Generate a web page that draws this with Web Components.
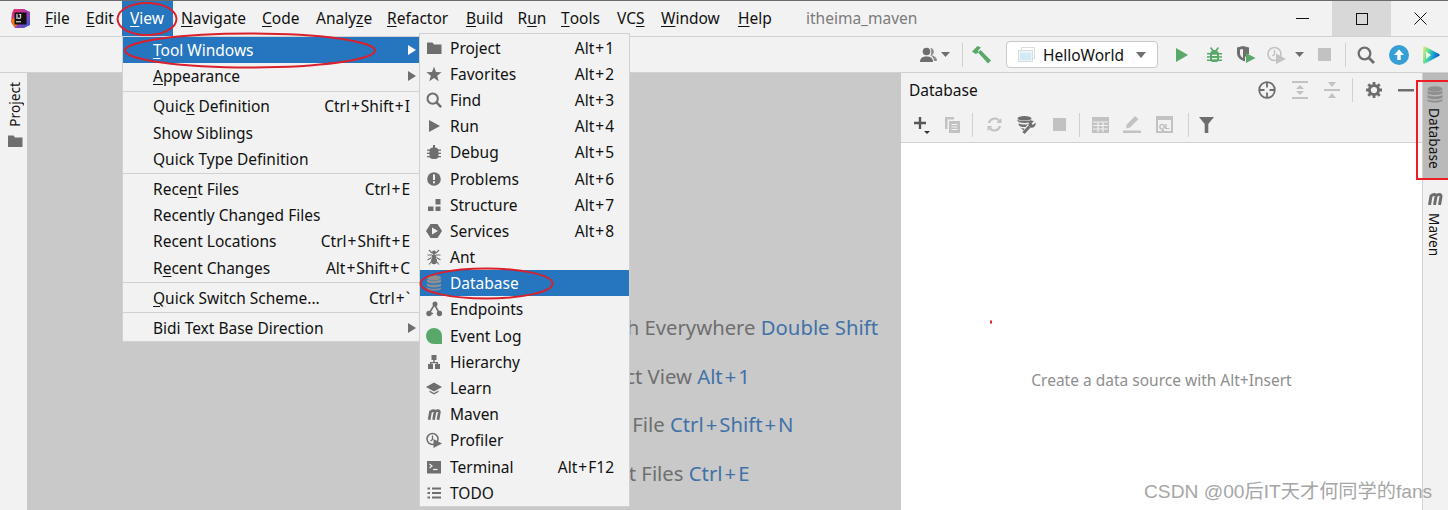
<!DOCTYPE html>
<html lang="en"><head><meta charset="utf-8"><title>itheima_maven</title>
<style>
html,body{margin:0;padding:0;width:1448px;height:510px;overflow:hidden;background:#f2f2f2}
body{font:15.5px "Noto Sans","Open Sans",sans-serif;color:#111}
u{text-underline-offset:2px}
ij-hint i{font-style:normal;margin:0 2px}
</style></head><body>
<ij-window>
  <ij-titlebar>
    <ij-icon slot="logo" name="ij" w="21" h="21"></ij-icon>
    <ij-menubar-item w="41"><u>F</u>ile</ij-menubar-item>
    <ij-menubar-item w="44"><u>E</u>dit</ij-menubar-item>
    <ij-menubar-item w="51" active><u>V</u>iew</ij-menubar-item>
    <ij-menubar-item w="81"><u>N</u>avigate</ij-menubar-item>
    <ij-menubar-item w="54"><u>C</u>ode</ij-menubar-item>
    <ij-menubar-item w="71">Analy<u>z</u>e</ij-menubar-item>
    <ij-menubar-item w="79"><u>R</u>efactor</ij-menubar-item>
    <ij-menubar-item w="51.5"><u>B</u>uild</ij-menubar-item>
    <ij-menubar-item w="43.5">R<u>u</u>n</ij-menubar-item>
    <ij-menubar-item w="56"><u>T</u>ools</ij-menubar-item>
    <ij-menubar-item w="44">VC<u>S</u></ij-menubar-item>
    <ij-menubar-item w="77"><u>W</u>indow</ij-menubar-item>
    <ij-menubar-item w="68"><u>H</u>elp</ij-menubar-item>
    <span slot="title">itheima_maven</span>
  </ij-titlebar>
  <ij-toolrow slot="toolbar" pad="920">
    <ij-icon name="person" w="18" h="16"></ij-icon>
    <ij-icon name="caret" w="9" h="5" ml="3"></ij-icon>
    <ij-sep ml="12"></ij-sep>
    <ij-icon name="hammer" w="19" h="18" ml="9"></ij-icon>
    <ij-combo ml="15">HelloWorld</ij-combo>
    <ij-icon name="run" w="12" h="14" ml="18"></ij-icon>
    <ij-icon name="debug" w="15" h="16" ml="19"></ij-icon>
    <ij-icon name="coverage" w="19" h="17" ml="15"></ij-icon>
    <ij-icon name="profilerd" w="19" h="18" ml="11"></ij-icon>
    <ij-icon name="caret" w="9" h="5" ml="9"></ij-icon>
    <ij-icon name="stopd" w="13" h="13" ml="14"></ij-icon>
    <ij-sep ml="14"></ij-sep>
    <ij-icon name="find" w="18" h="18" ml="11"></ij-icon>
    <ij-icon name="upload" w="20" h="20" ml="14"></ij-icon>
    <ij-icon name="plugin" w="18" h="18" ml="13"></ij-icon>
  </ij-toolrow>
  <ij-strip slot="left" side="left">
    <ij-stripe-button flip>Project<ij-icon slot="icon" name="folder" w="16" h="16"></ij-icon></ij-stripe-button>
  </ij-strip>
  <ij-editor slot="center">
    <ij-hint ml="575">Search Everywhere <b>Double Shift</b></ij-hint>
    <ij-hint ml="576">Project View <b>Alt<i>+</i>1</b></ij-hint>
    <ij-hint ml="575">Go to File <b>Ctrl<i>+</i>Shift<i>+</i>N</b></ij-hint>
    <ij-hint ml="571">Recent Files <b>Ctrl<i>+</i>E</b></ij-hint>
  </ij-editor>
  <ij-panel slot="panel" heading="Database" empty="Create a data source with Alt+Insert">
    <ij-icon slot="head" name="target" w="18" h="18"></ij-icon>
    <ij-icon slot="head" name="expand" w="16" h="18" ml="16"></ij-icon>
    <ij-icon slot="head" name="collapse" w="16" h="18" ml="16"></ij-icon>
    <ij-sep slot="head" ml="12"></ij-sep>
    <ij-icon slot="head" name="gear" w="16" h="16" ml="13"></ij-icon>
    <ij-icon slot="head" name="minus" w="16" h="3" ml="16"></ij-icon>
    <ij-icon slot="tools" name="plus" w="17" h="18"></ij-icon>
    <ij-icon slot="tools" name="copy" w="16" h="16" ml="14"></ij-icon>
    <ij-sep slot="tools" ml="12"></ij-sep>
    <ij-icon slot="tools" name="refresh" w="15" h="15" ml="14"></ij-icon>
    <ij-icon slot="tools" name="dbwrench" w="19" h="18" ml="15"></ij-icon>
    <ij-icon slot="tools" name="stopd" w="13" h="13" ml="17"></ij-icon>
    <ij-sep slot="tools" ml="13"></ij-sep>
    <ij-icon slot="tools" name="table" w="17" h="16" ml="12"></ij-icon>
    <ij-icon slot="tools" name="edit" w="18" h="17" ml="14"></ij-icon>
    <ij-icon slot="tools" name="ql" w="17" h="17" ml="15"></ij-icon>
    <ij-sep slot="tools" ml="15"></ij-sep>
    <ij-icon slot="tools" name="filter" w="15" h="16" ml="10"></ij-icon>
  </ij-panel>
  <ij-strip slot="right" side="right">
    <ij-stripe-button active>Database<ij-icon slot="icon" name="database" w="16" h="17"></ij-icon></ij-stripe-button>
    <ij-stripe-button>Maven<ij-icon slot="icon" name="maven" w="18" h="12"></ij-icon></ij-stripe-button>
  </ij-strip>

  <ij-menu slot="overlay" x="122" y="36" w="298" rpad="9" ptop="0">
    <ij-menu-item selected arrow><u>T</u>ool Windows</ij-menu-item>
    <ij-menu-item arrow><u>A</u>ppearance</ij-menu-item>
    <ij-menu-sep></ij-menu-sep>
    <ij-menu-item shortcut="Ctrl+Shift+I">Quic<u>k</u> Definition</ij-menu-item>
    <ij-menu-item>Show Siblings</ij-menu-item>
    <ij-menu-item>Quick Type Definition</ij-menu-item>
    <ij-menu-sep></ij-menu-sep>
    <ij-menu-item shortcut="Ctrl+E">Rece<u>n</u>t Files</ij-menu-item>
    <ij-menu-item>Recently Changed Files</ij-menu-item>
    <ij-menu-item shortcut="Ctrl+Shift+E">Recent Locations</ij-menu-item>
    <ij-menu-item shortcut="Alt+Shift+C">R<u>e</u>cent Changes</ij-menu-item>
    <ij-menu-sep></ij-menu-sep>
    <ij-menu-item shortcut="Ctrl+`"><u>Q</u>uick Switch Scheme...</ij-menu-item>
    <ij-menu-sep></ij-menu-sep>
    <ij-menu-item arrow>Bidi Text Base Direction</ij-menu-item>
  </ij-menu>
  <ij-menu slot="overlay" x="419" y="33" w="211" rpad="15" ptop="0.5">
    <ij-menu-item icon="folder" shortcut="Alt+1">Project</ij-menu-item>
    <ij-menu-item icon="star" shortcut="Alt+2">Favorites</ij-menu-item>
    <ij-menu-item icon="find" shortcut="Alt+3">Find</ij-menu-item>
    <ij-menu-item icon="runm" shortcut="Alt+4">Run</ij-menu-item>
    <ij-menu-item icon="bug" shortcut="Alt+5">Debug</ij-menu-item>
    <ij-menu-item icon="problems" shortcut="Alt+6">Problems</ij-menu-item>
    <ij-menu-item icon="structure" shortcut="Alt+7">Structure</ij-menu-item>
    <ij-menu-item icon="services" shortcut="Alt+8">Services</ij-menu-item>
    <ij-menu-item icon="ant">Ant</ij-menu-item>
    <ij-menu-item icon="database" selected>Database</ij-menu-item>
    <ij-menu-item icon="endpoints">Endpoints</ij-menu-item>
    <ij-menu-item icon="eventlog">Event Log</ij-menu-item>
    <ij-menu-item icon="hierarchy">Hierarchy</ij-menu-item>
    <ij-menu-item icon="learn">Learn</ij-menu-item>
    <ij-menu-item icon="maven">Maven</ij-menu-item>
    <ij-menu-item icon="profiler">Profiler</ij-menu-item>
    <ij-menu-item icon="terminal" shortcut="Alt+F12">Terminal</ij-menu-item>
    <ij-menu-item icon="todo">TODO</ij-menu-item>
  </ij-menu>
  <ij-annotations slot="overlay"></ij-annotations>
  <ij-watermark slot="overlay">CSDN @00后IT天才何同学的fans</ij-watermark>
</ij-window>
<script>
const G='#6e6e6e',D='#c2c2c2',GR='#59a869';
const ICONS={
 ij:`<svg viewBox="0 0 21 21"><defs><linearGradient id="a" x1="0" y1="0" x2="1" y2="1"><stop offset="0" stop-color="#fe2857"/><stop offset=".5" stop-color="#a53bb0"/><stop offset="1" stop-color="#2f5de0"/></linearGradient></defs><path d="M4 1h10l6 3v13l-6 3H5L1 14l1-9z" fill="url(#a)"/><path d="M1 12l4-3 2 9-3 1z" fill="#f97a12"/><rect x="4.5" y="4.5" width="12" height="12" fill="#111"/><text x="6" y="11" font-family="Liberation Sans" font-weight="700" font-size="6.5" fill="#fff">IJ</text><rect x="6" y="13.3" width="5" height="1" fill="#fff"/></svg>`,
 person:`<svg viewBox="0 0 18 16"><circle cx="6.5" cy="4.5" r="3.8" fill="${G}"/><path d="M0 15c0-4 2.500-5.500 6.500-5.500S13 11 13 15z" fill="${G}"/><path d="M10.500 1a3.800 3.800 0 0 1 1 7.300c3 .7 5.500 2 5.500 5.700h-3c0-3-2-5-3.500-5.500 1-2 1-5 0-7.500z" fill="#8d8d8d"/></svg>`,
 caret:`<svg viewBox="0 0 9 5"><path d="M0 0h9L4.500 5z" fill="${G}"/></svg>`,
 hammer:`<svg viewBox="0 0 19 18"><path d="M0 5.500 5.500 0l3.500 1.500L6.500 4 6 7 3.500 8z" fill="${GR}"/><path d="M6 6.500 8.500 4 19 14.500 16 17.500z" fill="${GR}"/></svg>`,
 run:`<svg viewBox="0 0 12 14"><path d="M0 0l12 7L0 14z" fill="${GR}"/></svg>`,
 debug:`<svg viewBox="0 0 15 16"><g fill="${GR}"><rect x="3" y="4" width="9" height="11" rx="3"/><rect x="0" y="6" width="15" height="1.500"/><rect x="0" y="9.200" width="15" height="1.500"/><rect x="0" y="12.500" width="15" height="1.500"/><path d="M3 1l1.200-1 2.300 3h2L10.800 0 12 1l-2 3H5z"/></g><rect x="5" y="7.700" width="5" height="1.300" fill="#f2f2f2"/><rect x="5" y="11" width="5" height="1.300" fill="#f2f2f2"/></svg>`,
 coverage:`<svg viewBox="0 0 19 17"><path d="M0 1.500 6 0l6 1.500V8l-4 3v4.500C3 14 0 11 0 7z" fill="${G}"/><path d="M3 3.500 6 3v9C4 11 3 9 3 7z" fill="#f2f2f2"/><path d="M9 7l9.500 5L9 17z" fill="${GR}"/></svg>`,
 profilerd:`<svg viewBox="0 0 19 18"><circle cx="7.500" cy="8" r="6.500" fill="none" stroke="${D}" stroke-width="1.600"/><path d="M7.500 4v4.500L5 10" fill="none" stroke="${D}" stroke-width="1.400"/><path d="M9 7.500 19 13 9 18z" fill="${D}"/></svg>`,
 stopd:`<svg viewBox="0 0 13 13"><rect width="13" height="13" fill="${D}"/></svg>`,
 find:`<svg viewBox="0 0 18 18"><circle cx="7.500" cy="7.500" r="5.800" fill="none" stroke="${G}" stroke-width="2.300"/><path d="M11.500 11.500 17 17" stroke="${G}" stroke-width="2.800"/></svg>`,
 upload:`<svg viewBox="0 0 20 20"><circle cx="10" cy="10" r="10" fill="#389fd6"/><path d="M10 4.500 15 10h-3.300v5H8.300v-5H5z" fill="#fff"/></svg>`,
 plugin:`<svg viewBox="0 0 18 18"><defs><linearGradient id="p" x1="0" y1="0" x2="1" y2=".3"><stop offset="0" stop-color="#f7ec7a"/><stop offset=".4" stop-color="#4fdc96"/><stop offset=".7" stop-color="#15a0d8"/><stop offset="1" stop-color="#0d5fc0"/></linearGradient></defs><path d="M1 1.500Q1 0 3 .5L17 8q1.500 1 0 2L3 17.500Q1 18 1 16.500z" fill="url(#p)"/><path d="M4 5.500 9 9l-5 4z" fill="#f0f9ee"/></svg>`,
 folder:`<svg viewBox="0 0 16 16"><path d="M1 2.500h5.500L8 4.500h7.500V14H1z" fill="${G}"/></svg>`,
 star:`<svg viewBox="0 0 16 16"><path d="M8 .8l2 5.200 5.600.3-4.400 3.500 1.500 5.400L8 12.100l-4.700 3.100 1.500-5.400L.4 6.300 6 6z" fill="${G}"/></svg>`,
 runm:`<svg viewBox="0 0 16 16"><path d="M3 2l11 6-11 6z" fill="${G}"/></svg>`,
 bug:`<svg viewBox="0 0 16 16"><g fill="${G}"><rect x="3.500" y="3.500" width="9" height="11.500" rx="3.500"/><rect x="1" y="5.500" width="14" height="1.300"/><rect x="1" y="8.700" width="14" height="1.300"/><rect x="1" y="12" width="14" height="1.300"/><rect x="7" y="1" width="2" height="3"/></g></svg>`,
 problems:`<svg viewBox="0 0 16 16"><circle cx="8" cy="8" r="6.800" fill="${G}"/><rect x="7" y="3.500" width="2" height="5.500" fill="#f2f2f2"/><rect x="7" y="10.300" width="2" height="2" fill="#f2f2f2"/></svg>`,
 structure:`<svg viewBox="0 0 16 16"><g fill="${G}"><rect x="9.500" y="2" width="5" height="5.500"/><rect x="2" y="9.500" width="5.500" height="4.500"/><rect x="9.500" y="9.500" width="5" height="4.500"/></g></svg>`,
 services:`<svg viewBox="0 0 16 16"><path d="M4.500 1h7L16 8l-4.500 7h-7L0 8z" fill="${G}"/><path d="M6 4.500 12 8l-6 3.500z" fill="#f2f2f2"/></svg>`,
 ant:`<svg viewBox="0 0 16 16"><g fill="${G}"><ellipse cx="8" cy="3.500" rx="2" ry="2"/><ellipse cx="8" cy="7.500" rx="2.300" ry="2.300"/><ellipse cx="8" cy="12" rx="3" ry="3.300"/></g><path d="M3 1l3 3M13 1l-3 3M1.500 6H6M14.500 6H10M1.500 11l4-2.500M14.500 11l-4-2.500M3 15.500l2.500-3M13 15.500l-2.500-3" stroke="${G}" stroke-width="1.100" fill="none"/></svg>`,
 database:`<svg viewBox="0 0 16 17"><g fill="#8f8f8f"><ellipse cx="8" cy="3" rx="7.500" ry="2.800"/><path d="M.5 4.500C2 6.500 14 6.500 15.500 4.500v2.700C14 9.600 2 9.600.5 7.200z"/><path d="M.5 8.800C2 11 14 11 15.500 8.800v2.700C14 13.900 2 13.900.5 11.500z"/><path d="M.5 13c1.500 2.300 13.500 2.300 15 0v1.500c-1.500 2.700-13.500 2.700-15 0z"/></g></svg>`,
 endpoints:`<svg viewBox="0 0 16 16"><path d="M3 12.500 8.500 3.500l5 9" fill="none" stroke="${G}" stroke-width="1.600"/><path d="M3 12.500h4" stroke="${G}" stroke-width="1.400"/><circle cx="3" cy="12.500" r="2.700" fill="${G}"/><circle cx="9" cy="3" r="2.500" fill="${G}"/><circle cx="13.500" cy="12.500" r="2.700" fill="${G}"/></svg>`,
 eventlog:`<svg viewBox="0 0 16 16"><path d="M8 0a8 8 0 0 0 0 16h8V8a8 8 0 0 0-8-8z" fill="${GR}"/></svg>`,
 hierarchy:`<svg viewBox="0 0 16 16"><g fill="${G}"><rect x="5.500" y="1" width="5" height="5"/><rect x="2" y="10" width="5" height="5"/><rect x="9" y="10" width="5" height="5"/><path d="M7.300 6h1.400v2H12v2h-1.400V9.300H5.400V10H4V8h3.300z"/></g></svg>`,
 learn:`<svg viewBox="0 0 16 16"><path d="M8 2.500 16 7l-8 4.500L0 7z" fill="${G}"/><path d="M3.500 10.500 8 13l4.500-2.500V12L8 14.500 3.500 12z" fill="${G}"/></svg>`,
 maven:`<svg viewBox="0 0 18 12"><path d="M3.500 12 5.200 2M8.500 12l1.500-8.500C10.300 1 7 1 5.200 3M13.500 12l1.500-8.500C15.300 1 12 1 10 3" fill="none" stroke="${G}" stroke-width="3"/></svg>`,
 profiler:`<svg viewBox="0 0 16 16"><circle cx="6.500" cy="7" r="5.500" fill="none" stroke="${G}" stroke-width="1.500"/><path d="M6.500 3.500v4L4.500 9" fill="none" stroke="${G}" stroke-width="1.300"/><path d="M7.500 7 16 11.500 7.500 16z" fill="${G}"/></svg>`,
 terminal:`<svg viewBox="0 0 16 16"><rect x="1" y="2" width="14" height="12.500" fill="${G}"/><path d="M3.500 5l2.500 2-2.500 2" fill="none" stroke="#f2f2f2" stroke-width="1.200"/><path d="M7 10.500h4.500" stroke="#f2f2f2" stroke-width="1.200"/></svg>`,
 todo:`<svg viewBox="0 0 16 16"><path d="M1.500 3.500h2.500M6 3.500h9M1.500 8h2.500M6 8h9M1.500 12.500h2.500M6 12.500h9" stroke="${G}" stroke-width="2"/></svg>`,
 target:`<svg viewBox="0 0 18 18"><circle cx="9" cy="9" r="7.800" fill="none" stroke="${G}" stroke-width="1.800"/><path d="M9 1v5.500M9 11.500V17M1 9h5.500M11.500 9H17" stroke="${G}" stroke-width="1.800"/></svg>`,
 expand:`<svg viewBox="0 0 16 18"><g fill="${D}"><rect y="0" width="16" height="2"/><rect y="16" width="16" height="2"/><path d="M8 4l4 4H4zM8 14l-4-4h8z"/></g></svg>`,
 collapse:`<svg viewBox="0 0 16 18"><g fill="${D}"><rect y="8" width="16" height="2"/><path d="M4 1h8L8 6zM8 12l4 5H4z"/></g></svg>`,
 gear:`<svg viewBox="0 0 16 16"><circle cx="8" cy="8" r="4.600" fill="none" stroke="${G}" stroke-width="3"/><path d="M8 0v3M8 13v3M0 8h3M13 8h3M2.300 2.300l2.200 2.200M11.500 11.500l2.200 2.200M13.700 2.300l-2.200 2.200M4.500 11.500l-2.200 2.200" stroke="${G}" stroke-width="2.800"/></svg>`,
 minus:`<svg viewBox="0 0 16 3"><rect width="16" height="2.500" fill="${G}"/></svg>`,
 plus:`<svg viewBox="0 0 17 18"><path d="M7 1v12M1 7h12" stroke="#555" stroke-width="2.400"/><path d="M11 15h6l-3 3z" fill="#333"/></svg>`,
 copy:`<svg viewBox="0 0 16 16"><path d="M1 0h9v2.500H3.500V12H1z" fill="${D}"/><rect x="5" y="4" width="11" height="12" fill="${D}"/><path d="M7.500 7.500h6M7.500 10h6M7.500 12.500h6" stroke="#f2f2f2" stroke-width="1"/></svg>`,
 refresh:`<svg viewBox="0 0 15 15"><path d="M2 6a5.800 5.800 0 0 1 10-2.500M13 9a5.800 5.800 0 0 1-10 2.500" fill="none" stroke="${D}" stroke-width="2.200"/><path d="M14.500 1v5h-5zM.5 14V9h5z" fill="${D}"/></svg>`,
 dbwrench:`<svg viewBox="0 0 19 18"><g fill="${G}"><ellipse cx="7.500" cy="2.300" rx="7" ry="2.300"/><path d="M.5 3.500C2 5.500 13 5.500 14.500 3.500V5C13 7.500 2 7.500.5 5z"/><path d="M1.500 7C3 8.800 9 9 11 8L8.500 11C5 11 3 10.500 2 9.500z"/><path d="M3.500 11.500c1 .7 3 1 4 1L6.500 14.500z"/></g><path d="M6.500 17l6-6.500" stroke="${G}" stroke-width="3"/><path d="M11.500 9.500a4 4 0 0 1 5.500-4.500l-2.500 2.500 1.500 1.500 2.500-2.500a4 4 0 0 1-5 5z" fill="${G}"/></svg>`,
 table:`<svg viewBox="0 0 17 16"><rect width="17" height="16" fill="${D}"/><path d="M1 5h15M1 8.500h15M1 12h15M6 5v10M11 5v10" stroke="#f2f2f2" stroke-width="1.200"/></svg>`,
 edit:`<svg viewBox="0 0 18 17"><path d="M12 0l3.500 3L7 11.500l-4 1 .8-4z" fill="${D}"/><rect y="14.500" width="18" height="2.500" fill="${D}"/></svg>`,
 ql:`<svg viewBox="0 0 17 17"><rect x="1" y="1" width="15" height="15" fill="none" stroke="${D}" stroke-width="2"/><rect x="1" y="1" width="15" height="3" fill="${D}"/><text x="3" y="13" font-family="Liberation Sans" font-weight="700" font-size="7.500" fill="#b0b0b0">QL</text></svg>`,
 filter:`<svg viewBox="0 0 15 16"><path d="M0 0h15L9.300 7v9H5.700V7z" fill="${G}"/></svg>`,
};
const def=(n,c)=>customElements.define(n,c);
const shadow=(el,html)=>{el.attachShadow({mode:'open'}).innerHTML=html};

def('ij-window',class extends HTMLElement{constructor(){super();shadow(this,`<style>
:host{display:grid;width:1448px;height:510px;position:relative;overflow:hidden;box-sizing:border-box;border-top:1px solid #6b6b6b;background:#f2f2f2;
 grid-template-rows:35px 1px 35px 1px 437px;grid-template-columns:27px 874px 521px 26px}
.tb{grid-column:1/-1;grid-row:1}.l1{grid-column:1/-1;grid-row:2;background:#d1d1d1}
.tl{grid-column:1/-1;grid-row:3}.l2{grid-column:1/-1;grid-row:4;background:#d1d1d1}
.a{grid-row:5;min-height:0;min-width:0;overflow:hidden;display:flex}
</style><div class="tb"><slot></slot></div><div class="l1"></div><div class="tl"><slot name="toolbar"></slot></div><div class="l2"></div>
<div class="a"><slot name="left"></slot></div><div class="a"><slot name="center"></slot></div><div class="a"><slot name="panel"></slot></div><div class="a"><slot name="right"></slot></div>
<slot name="overlay"></slot>`)}});

def('ij-titlebar',class extends HTMLElement{constructor(){super();shadow(this,`<style>
:host{display:flex;height:35px;align-items:stretch;overflow:hidden;white-space:nowrap}
.logo{width:37px;padding-left:10px;box-sizing:border-box;display:flex;align-items:center}
.items{display:flex}
.title{margin-left:8px;align-self:center;color:#7b7b7b;margin-top:-2px}
.ctl{margin-left:auto;display:flex;margin-right:-2px}
.ctl div{width:59px;display:flex;align-items:center;justify-content:center}
.ctl .h{background:#d8d8d8}
svg{display:block}
</style><div class="logo"><slot name="logo"></slot></div><div class="items"><slot></slot></div><div class="title"><slot name="title"></slot></div>
<div class="ctl"><div><svg width="13" height="13"><path d="M0 6.500h13" stroke="#111"/></svg></div><div class="h"><svg width="12" height="12"><rect x=".5" y=".5" width="11" height="11" fill="none" stroke="#111"/></svg></div><div><svg width="13" height="13"><path d="M.5.500l12 12M12.500.500l-12 12" stroke="#111"/></svg></div></div>`)}});

def('ij-menubar-item',class extends HTMLElement{constructor(){super();shadow(this,`<style>
:host{display:flex;align-items:center;padding-left:8px;box-sizing:border-box;height:35px;padding-bottom:1px}
:host([active]){background:#2675bf;color:#fff}
</style><slot></slot>`)}
 connectedCallback(){this.style.width=this.getAttribute('w')+'px'}});

def('ij-toolrow',class extends HTMLElement{constructor(){super();shadow(this,`<style>
:host{display:flex;align-items:center;height:35px;white-space:nowrap}
</style><slot></slot>`)}
 connectedCallback(){this.style.paddingLeft=this.getAttribute('pad')+'px'}});

def('ij-icon',class extends HTMLElement{constructor(){super();shadow(this,`<style>
:host{display:inline-flex;flex:none}svg{display:block;width:100%;height:100%}
</style>`)}
 connectedCallback(){const a=n=>this.getAttribute(n);
  this.style.width=a('w')+'px';this.style.height=a('h')+'px';if(a('ml'))this.style.marginLeft=a('ml')+'px';
  const t=document.createElement('template');t.innerHTML=ICONS[a('name')];this.shadowRoot.append(t.content)}});

def('ij-sep',class extends HTMLElement{constructor(){super();shadow(this,`<style>
:host{display:block;flex:none;width:1px;height:24px;background:#d1d1d1}</style>`)}
 connectedCallback(){this.style.marginLeft=(this.getAttribute('ml')||0)+'px'}});

def('ij-combo',class extends HTMLElement{constructor(){super();shadow(this,`<style>
:host{display:flex;align-items:center;flex:none;box-sizing:border-box;width:152px;height:27px;background:#fff;border:1px solid #c9c9c9;border-radius:4px;padding-left:11px}
.t{margin-left:8px;width:93px}
svg{display:block}
</style><svg width="17" height="15" viewBox="0 0 17 15"><rect x="3.500" y=".5" width="13" height="11" fill="#fff" stroke="#dcdcdc"/><rect x=".5" y="3.500" width="14" height="11" fill="#eaf5fa" stroke="#dcdcdc"/><rect x="2" y="6" width="11" height="7" fill="#d3eaf5"/></svg><span class="t"><slot></slot></span>
<svg width="10" height="6" viewBox="0 0 10 6"><path d="M0 0h10L5 6z" fill="#6e6e6e"/></svg>`)}
 connectedCallback(){this.style.marginLeft=this.getAttribute('ml')+'px'}});

def('ij-strip',class extends HTMLElement{constructor(){super();shadow(this,`<style>
:host{display:flex;flex:1;flex-direction:column;background:#f2f2f2;font-size:13.700px;color:#111;min-width:0;--tshift:0px}
:host([side=right]){border-left:1px solid #d1d1d1;--tshift:-2px}
:host([side=left]){--tshift:1px}
</style><slot></slot>`)}});

def('ij-stripe-button',class extends HTMLElement{constructor(){super();shadow(this,`<style>
:host{display:flex;flex-direction:column;align-items:center;padding:14px 0 0;flex:none}
:host([active]){background:#bababa;height:93px;padding-top:13px}
:host([flip]){flex-direction:column-reverse;justify-content:flex-end;padding-top:0}
.t{writing-mode:vertical-rl;margin-top:5px;line-height:16px;position:relative;left:var(--tshift)}
:host(:not([active]):not([flip])) .t{margin-top:8px}
:host([flip]) .t{transform:rotate(180deg);margin:9px 0 6px}
::slotted(ij-icon){position:relative;left:calc(var(--tshift) * .5 + .5px)}
</style><slot name="icon"></slot><span class="t"><slot></slot></span>`)}});

def('ij-editor',class extends HTMLElement{constructor(){super();shadow(this,`<style>
:host{display:flex;flex:1;min-width:0;flex-direction:column;background:#c9c9c9;padding-top:230px;font-size:20.300px;color:#6f6f6f;white-space:nowrap;overflow:hidden}
</style><slot></slot>`)}});

def('ij-hint',class extends HTMLElement{constructor(){super();shadow(this,`<style>
:host{display:block;height:48.500px;line-height:48.500px;flex:none}
::slotted(b){color:#4072a8;font-weight:400}
</style><slot></slot>`)}
 connectedCallback(){this.style.marginLeft=(this.getAttribute('ml')-27)+'px'}});

def('ij-panel',class extends HTMLElement{constructor(){super();shadow(this,`<style>
:host{display:flex;flex:1;min-width:0;flex-direction:column;background:#fff;color:#111}
.h,.t{display:flex;align-items:center;background:#f2f2f2;flex:none}
.h{height:34px;padding:0 8px 0 8px}.t{height:35px;padding-left:12px;border-bottom:1px solid #d1d1d1}
.h .n{margin-right:auto}
.e{flex:1;display:flex;justify-content:center;padding-top:226px;color:#8e8e8e;font-size:15.500px;white-space:nowrap}
</style><div class="h"><span class="n"></span><slot name="head"></slot></div><div class="t"><slot name="tools"></slot></div><div class="e"></div>`)}
 connectedCallback(){this.shadowRoot.querySelector('.n').textContent=this.getAttribute('heading');this.shadowRoot.querySelector('.e').textContent=this.getAttribute('empty')}});

def('ij-menu',class extends HTMLElement{constructor(){super();shadow(this,`<style>
:host{position:absolute;box-sizing:border-box;background:#f2f2f2;border:1px solid #d1d1d1;display:flex;flex-direction:column;color:#111}
</style><slot></slot>`)}
 connectedCallback(){const a=n=>this.getAttribute(n);Object.assign(this.style,{left:a('x')+'px',top:(a('y')-1)+'px',width:a('w')+'px',paddingTop:a('ptop')+'px'});this.style.setProperty('--rpad',a('rpad')+'px')}});

def('ij-menu-sep',class extends HTMLElement{constructor(){super();shadow(this,`<style>
:host{display:block;height:4px;box-sizing:border-box;padding:1.500px 0}
div{height:1px;background:#d1d1d1}
</style><div></div>`)}});

def('ij-menu-item',class extends HTMLElement{constructor(){super();shadow(this,`<style>
:host{display:flex;align-items:center;height:26.200px;white-space:nowrap;position:relative;padding-right:var(--rpad)}
:host([selected]){background:#2675bf;color:#fff}
.i{width:30px;flex:none;display:flex;justify-content:center;box-sizing:border-box}
.i ij-icon{margin-left:-2px}
.t{flex:1}
.s i{font-style:normal;margin:0 1px}
.a{position:absolute;right:3px;top:50%;margin-top:-5px;width:0;height:0;border-left:8px solid #6e6e6e;border-top:5px solid transparent;border-bottom:5px solid transparent}
:host([selected]) .a{border-left-color:#fff}
</style><span class="i"></span><span class="t"><slot></slot></span><span class="s"></span><span class="a" hidden></span>`)}
 connectedCallback(){const r=this.shadowRoot,a=n=>this.getAttribute(n);
  if(a('icon')){const i=document.createElement('ij-icon');i.setAttribute('name',a('icon'));i.setAttribute('w','16');i.setAttribute('h',a('icon')=='maven'?'11':'16');r.querySelector('.i').append(i)}
  if(a('shortcut'))r.querySelector('.s').innerHTML=a('shortcut').split('+').join('<i>+</i>');
  const ar=r.querySelector('.a');if(this.hasAttribute('arrow'))ar.hidden=false;else ar.remove()}});

def('ij-annotations',class extends HTMLElement{constructor(){super();shadow(this,`<style>
:host{position:absolute;left:0;top:-1px;width:1448px;height:510px;pointer-events:none}
svg{display:block}
</style><svg width="1448" height="510" fill="none" stroke="#d9202c" stroke-width="2">
<ellipse cx="147" cy="19" rx="29.500" ry="16"/>
<ellipse cx="250" cy="50.500" rx="125" ry="17"/>
<ellipse cx="486.500" cy="283.500" rx="66" ry="15"/>
<rect x="1417" y="81" width="32" height="98" stroke="#ee1c25"/>
<rect x="990" y="320.500" width="2" height="3" fill="#e8202a" stroke="none"/>
</svg>`)}});

def('ij-watermark',class extends HTMLElement{constructor(){super();shadow(this,`<style>
:host{position:absolute;left:1144px;top:479px;font:19.200px/24px "Liberation Sans","Noto Sans CJK SC",sans-serif;color:#a6a6a6;white-space:nowrap}
</style><slot></slot>`)}});
</script>
</body></html>
